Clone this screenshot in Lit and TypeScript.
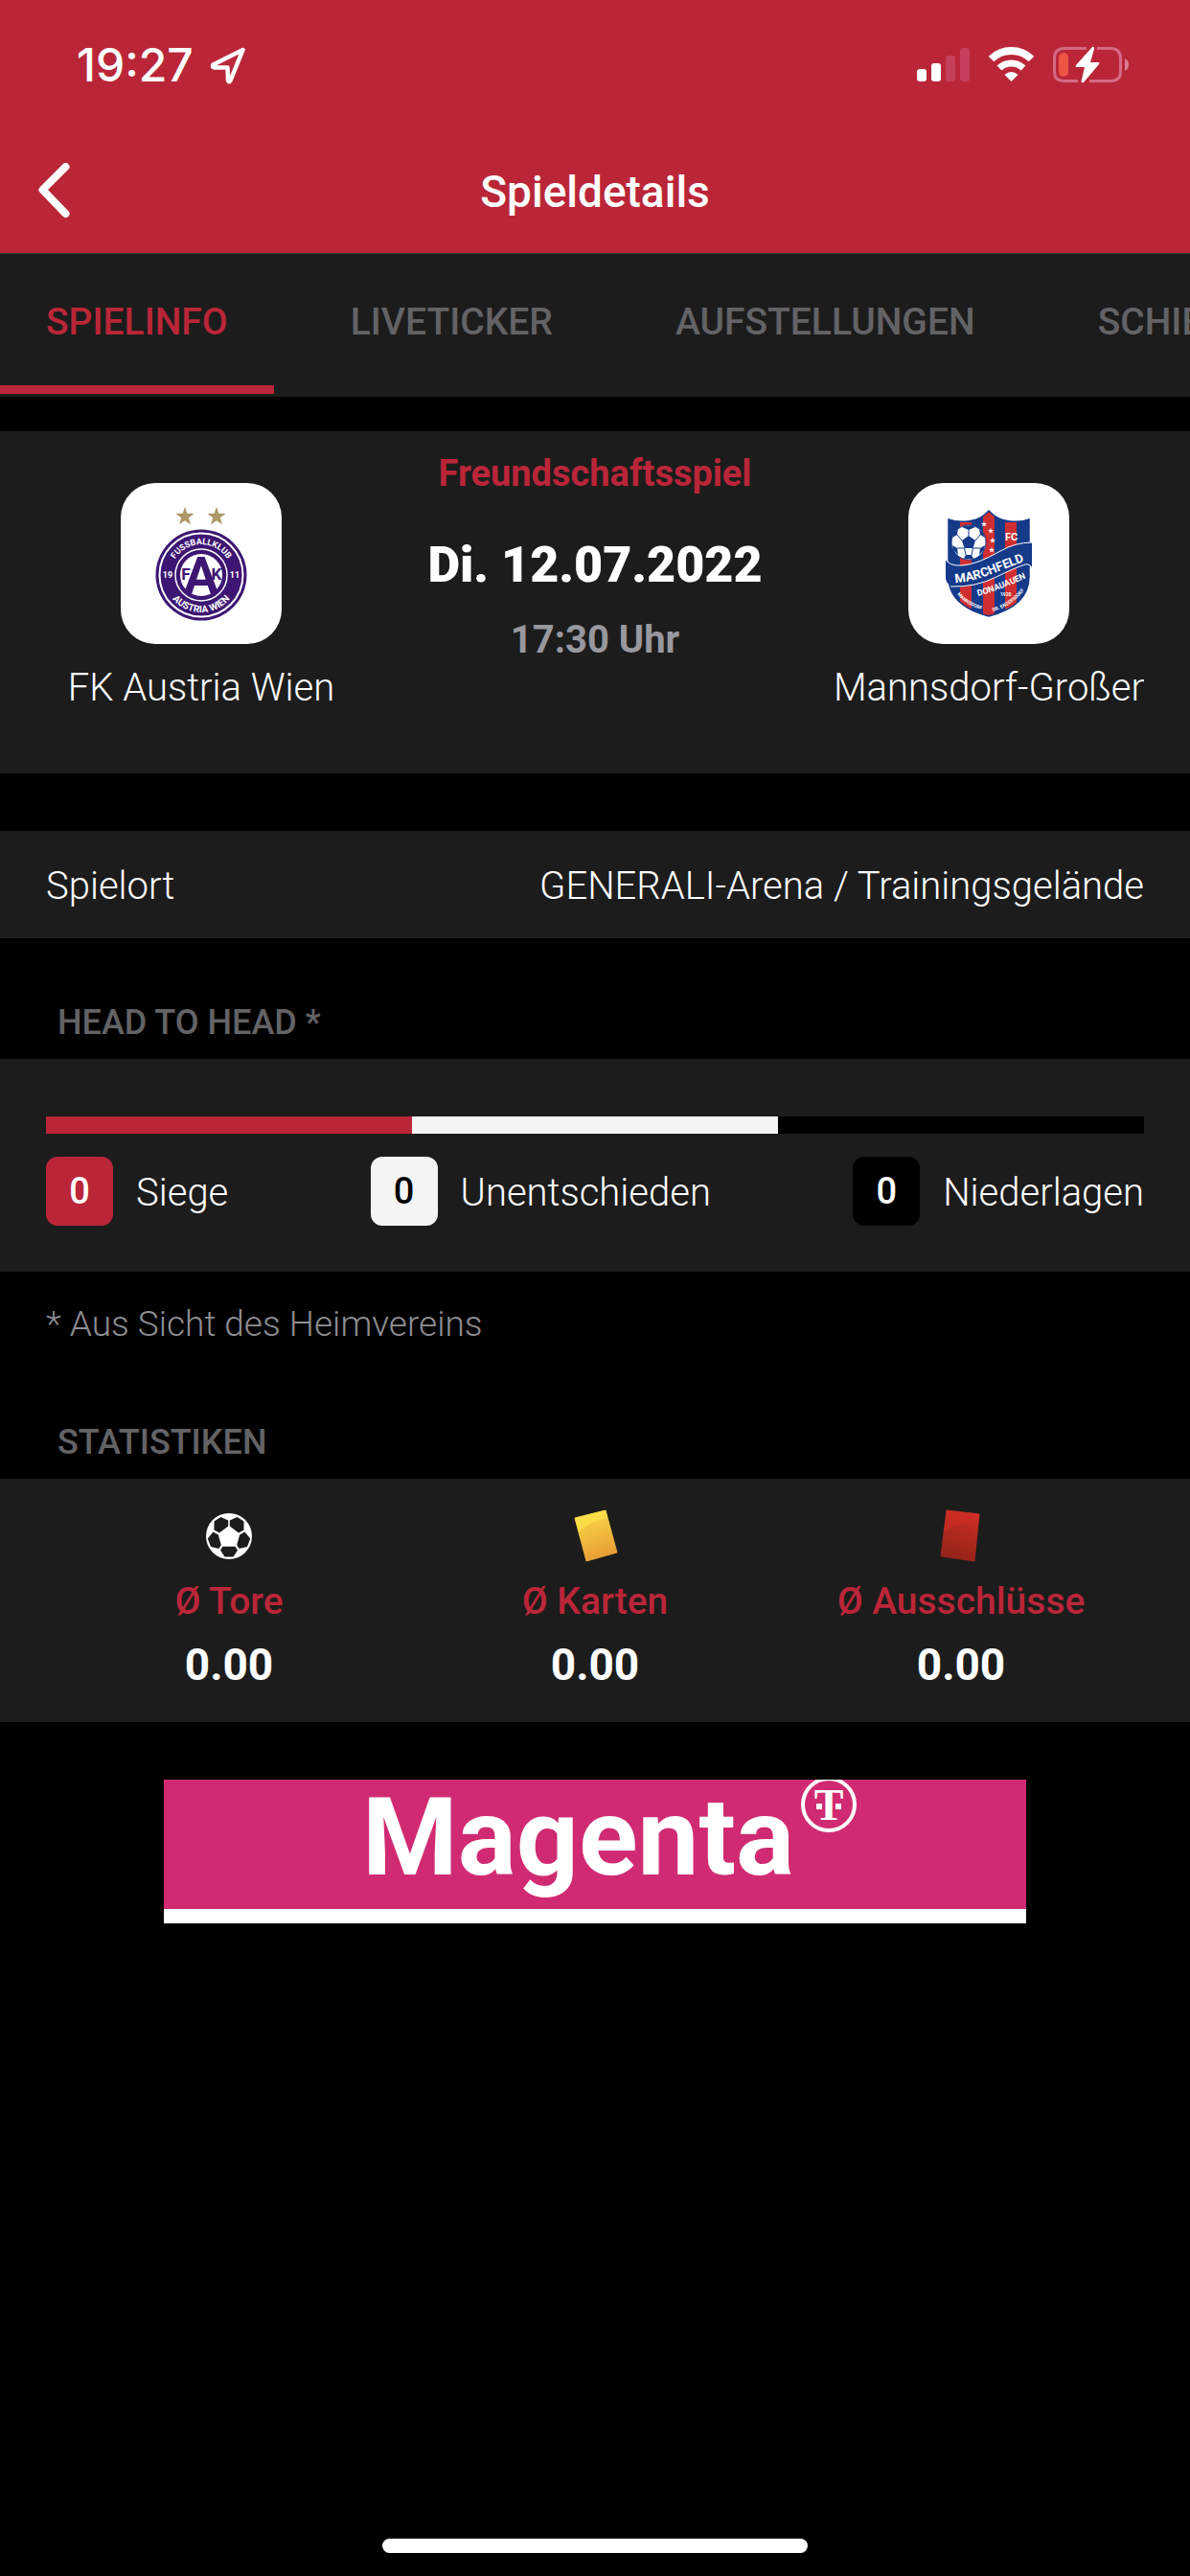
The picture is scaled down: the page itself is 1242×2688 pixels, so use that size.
import { LitElement, html, css, svg } from "lit";
import { customElement, property, state } from "lit/decorators.js";
import { classMap } from "lit/directives/class-map.js";

const STAR = "0,-10 2.4,-3.2 9.6,-3 3.9,1.3 5.9,8.2 0,4.2 -5.9,8.2 -3.9,1.3 -9.6,-3 -2.4,-3.2";

@customElement("status-bar")
class StatusBar extends LitElement {
  static styles = css`
    :host { display: block; }
    .bar {
      display: flex;
      justify-content: space-between;
      align-items: center;
      height: 136px;
      padding: 0 62px 0 80px;
      color: #fff;
    }
    .left { display: flex; align-items: center; gap: 16px; }
    .time { font: 500 48px/56px Inter, "Liberation Sans", sans-serif; }
    svg { display: block; }
  `;

  render() {
    return html`
      <div class="bar">
        <div class="left">
          <span class="time">19:27</span>
          <svg width="40" height="40" viewBox="0 0 40 40" fill="none" stroke="#fff" stroke-width="4.5" stroke-linejoin="round" aria-hidden="true">
            <path d="M35.500 4 L4.500 19.500 Q3 22 6 22.500 L19.500 22.500 L20 36 Q21 38.500 22.500 36 Z"/>
          </svg>
        </div>
        <svg width="223" height="42" viewBox="0 0 223 42" aria-hidden="true">
          <g fill="#fff">
            <rect x="0" y="25" width="10" height="13" rx="3"/>
            <rect x="15" y="19" width="10" height="19" rx="3"/>
            <rect x="30" y="11" width="10" height="27" rx="3" fill="#c5405c"/>
            <rect x="45" y="3" width="10" height="35" rx="3" fill="#c5405c"/>
          </g>
          <g fill="none" stroke="#fff">
            <path d="M77.500 14.500 A30 30 0 0 1 119.500 14.500" stroke-width="8"/>
            <path d="M86 24 A18 18 0 0 1 111 24" stroke-width="7"/>
          </g>
          <path d="M91.500 31 Q98.500 25 105.500 31 L98.500 38 Z" fill="#fff"/>
          <g fill="none" stroke="#d46a84" stroke-width="3">
            <path d="M177 3.500 H154 Q143.500 3.500 143.500 14 V28 Q143.500 37.500 154 37.500 H168"/>
            <path d="M188 3.500 H202 Q212.500 3.500 212.500 14 V28 Q212.500 37.500 202 37.500 H180"/>
          </g>
          <path d="M217 14 Q221 16 221 20.500 T217 27 Z" fill="#d98096"/>
          <rect x="148" y="8" width="10" height="25" rx="5" fill="#ee5545"/>
          <path d="M183 2 L166 21 Q165 23 167 23 H175 L171.500 38 Q172 40 174 39 L190 20 Q191 18 189 18 H181 L185 4 Q185 1 183 2 Z" fill="#fff"/>
        </svg>
      </div>
    `;
  }
}

@customElement("team-crest")
class TeamCrest extends LitElement {
  @property() team = "home";

  static styles = css`
    :host { display: block; }
    .tile {
      width: 168px;
      height: 168px;
      border-radius: 36px;
      background: #fff;
      overflow: hidden;
    }
    svg { display: block; font-family: Roboto, "Liberation Sans", sans-serif; font-weight: 700; }
  `;

  private home() {
    return svg`
      <defs>
        <path id="upper" d="M52 96 A32 32 0 0 1 116 96"/>
        <path id="lower" d="M45 96 A39 39 0 0 0 123 96"/>
      </defs>
      <g fill="#ab9866">
        <polygon points=${STAR} transform="translate(67 35)"/>
        <polygon points=${STAR} transform="translate(100 35)"/>
      </g>
      <circle cx="84" cy="96" r="47.500" fill="#3d1673"/>
      <circle cx="84" cy="96" r="43.500" fill="none" stroke="#fff" stroke-width="2"/>
      <circle cx="84" cy="96" r="27" fill="none" stroke="#fff" stroke-width="1.500"/>
      <circle cx="84" cy="96" r="22" fill="#fff"/>
      <g fill="#fff" text-anchor="middle">
        <text font-size="9"><textPath href="#upper" startOffset="50%">FUSSBALLKLUB</textPath></text>
        <text font-size="10"><textPath href="#lower" startOffset="50%">AUSTRIA WIEN</textPath></text>
        <text x="49" y="99" font-size="9">19</text>
        <text x="119" y="99" font-size="9">11</text>
      </g>
      <g fill="#3d1673" text-anchor="middle">
        <text x="84" y="115" font-size="54">A</text>
        <text x="68" y="101" font-size="17">F</text>
        <text x="100" y="101" font-size="17">K</text>
      </g>`;
  }

  private away() {
    return svg`
      <defs>
        <clipPath id="shield"><path d="M84 29 Q93 39 106 40 Q118 41 126 38 V98 Q126 128 84 139 Q42 128 42 98 V38 Q50 41 62 40 Q75 39 84 29 Z"/></clipPath>
        <path id="name" d="M49 104 Q66 103 84 96 T126 80"/>
        <path id="place" d="M73 118 Q90 114 128 97"/>
        <path id="west" d="M51 116 Q60 128 82 134"/>
        <path id="east" d="M88 134 Q110 128 122 110"/>
      </defs>
      <g clip-path="url(#shield)">
        <rect x="38" y="25" width="92" height="118" fill="#153a8a"/>
        <g fill="#cf2f31">
          <rect x="54" y="41" width="12" height="100"/>
          <rect x="78" y="25" width="12" height="118"/>
          <rect x="101" y="41" width="12" height="100"/>
        </g>
      </g>
      <path d="M84 29 Q93 39 106 40 Q118 41 126 38 V98 Q126 128 84 139 Q42 128 42 98 V38 Q50 41 62 40 Q75 39 84 29 Z" fill="none" stroke="#153a8a" stroke-width="1.500"/>
      <circle cx="63" cy="62" r="18" fill="#fff" stroke="#153a8a" stroke-width="1"/>
      <g fill="#153a8a">
        <polygon points="63,55 70,60 67.500,68 58.500,68 56,60"/>
        <polygon points="56,46 63,49 70,46 67,44.500 59,44.500"/>
        <polygon points="46,57 51,54 52,48 48,52"/>
        <polygon points="80,57 75,54 74,48 78,52"/>
        <polygon points="46,65 51,68 52,75 47,70"/>
        <polygon points="80,65 75,68 74,75 79,70"/>
        <polygon points="58,79 60,75 66,75 68,79"/>
      </g>
      <g stroke="#153a8a" stroke-width="1" fill="none">
        <path d="M63 55V49 M70 60L75 54 M56 60L51 54 M67.500 68L75 68 M58.500 68L51 68 M67.500 68L66 75 M58.500 68L60 75"/>
      </g>
      <g fill="#fff">
        <polygon points=${STAR} transform="translate(79 43) scale(.32)"/>
        <polygon points=${STAR} transform="translate(86 50) scale(.32)"/>
        <polygon points=${STAR} transform="translate(88 60) scale(.32)"/>
        <polygon points=${STAR} transform="translate(87 70) scale(.32)"/>
      </g>
      <path d="M39 80 Q42 87 56 86 Q72 85 96 71 Q112 62 129 62 V89 Q127 84 122 85 Q112 88 92 98 Q70 109 48 109 Q40 106 39 100 Z" fill="#153a8a"/>
      <path d="M39 78 Q41 87 56 86 Q72 85 96 71 Q112 62 129 62 M129 89 Q127 84 122 85 Q112 88 92 98 Q70 109 44 108" fill="none" stroke="#fff" stroke-width="1"/>
      <g fill="#fff">
        <text x="101" y="60" font-size="11">FC</text>
        <text font-size="13"><textPath href="#name">MARCHFELD</textPath></text>
        <text font-size="9"><textPath href="#place">DONAUAUEN</textPath></text>
        <text x="96" y="118" font-size="5">1920</text>
        <text font-size="5"><textPath href="#west">MANNSDORF</textPath></text>
        <text font-size="5"><textPath href="#east">GR. ENZERSDORF</textPath></text>
      </g>`;
  }

  render() {
    return html`
      <div class="tile">
        <svg width="168" height="168" viewBox="0 0 168 168" aria-hidden="true">
          ${this.team === "home" ? this.home() : this.away()}
        </svg>
      </div>
    `;
  }
}

const ballIcon = svg`
  <circle cx="24" cy="28" r="24" fill="#fff"/>
  <g fill="#1c1c1c" transform="translate(0 4)">
    <polygon points="8.500,8.500 15.500,4 23.200,7.500 23.200,13.500 14,20.500 8.500,17.500"/>
    <polygon points="39.500,8.500 32.500,4 24.800,7.500 24.800,13.500 34,20.500 39.500,17.500"/>
    <polygon points="7.500,19.500 12.800,22.500 15.800,33 13.500,37 5,35 1.800,26.500"/>
    <polygon points="40.500,19.500 35.200,22.500 32.200,33 34.500,37 43,35 46.200,26.500"/>
    <polygon points="17.500,34.800 30.500,34.800 33,38.500 28.500,45.500 19.500,45.500 15,38.500"/>
  </g>`;

const yellowIcon = svg`
  <defs><linearGradient id="y" x1=".3" y1="0" x2=".6" y2="1"><stop offset="0" stop-color="#fadb46"/><stop offset="1" stop-color="#e79a35"/></linearGradient></defs>
  <polygon points="3,9 35,1 47,45 15,54" fill="url(#y)" stroke="url(#y)" stroke-linejoin="round"/>
  <path d="M3 9 L35 1 L37 9 Q18 12 7 24 Z" fill="#ffec4e" opacity=".5"/>`;

const redIcon = svg`
  <defs><linearGradient id="r" x1=".6" y1="0" x2=".3" y2="1"><stop offset="0" stop-color="#cb2d24"/><stop offset="1" stop-color="#912318"/></linearGradient></defs>
  <polygon points="9,1 43,5 38,54 3,49" fill="url(#r)" stroke="url(#r)" stroke-linejoin="round"/>
  <path d="M9 1 L43 5 L42 14 Q18 13 6 24 Z" fill="#cf2e25" opacity=".6"/>`;

@customElement("app-root")
class AppRoot extends LitElement {
  @state() private active = 0;

  private tabs = ["SPIELINFO", "LIVETICKER", "AUFSTELLUNGEN", "SCHIEDSRICHTER"];

  private record = [
    { label: "Siege", value: 0, tone: "win", share: 1 },
    { label: "Unentschieden", value: 0, tone: "draw", share: 1 },
    { label: "Niederlagen", value: 0, tone: "loss", share: 1 },
  ];

  private stats = [
    { label: "Ø Tore", value: "0.00", icon: ballIcon },
    { label: "Ø Karten", value: "0.00", icon: yellowIcon },
    { label: "Ø Ausschlüsse", value: "0.00", icon: redIcon },
  ];

  static styles = css`
    :host {
      display: flex;
      flex-direction: column;
      min-height: 100vh;
      background: #000;
      color: #fff;
      font: 300 40px/48px Roboto, "Liberation Sans", sans-serif;
      overflow: hidden;
      --red: #ba2638;
      --panel: #1c1c1c;
      --muted: #636366;
    }
    h1, h2, p, ul { margin: 0; padding: 0; font: inherit; }
    ul { list-style: none; }
    button { border: 0; background: none; padding: 0; font: inherit; color: inherit; }
    svg { display: block; }

    .header { background: var(--red); border-bottom: 1px solid #3a3a3a; }
    .nav {
      display: grid;
      grid-template-columns: 120px 1fr 120px;
      align-items: center;
      height: 128px;
    }
    .back { display: flex; padding: 0 36px; }
    .title { text-align: center; font-weight: 500; font-size: 46px; }

    .tabs { display: flex; gap: 32px; height: 149px; background: var(--panel); overflow: hidden; }
    .tab {
      flex: none;
      height: 146px;
      padding: 4px 48px 0;
      border-bottom: 9px solid transparent;
      box-sizing: border-box;
      color: var(--muted);
      font-weight: 500;
      font-size: 39px;
    }
    .tab.on { color: var(--red); border-color: var(--red); }

    .panel { background: var(--panel); }
    .match {
      display: grid;
      grid-template-columns: 324px 1fr 324px;
      margin-top: 36px;
      padding: 20px 48px 65px;
    }
    .team { display: flex; flex-direction: column; align-items: center; gap: 22px; padding-top: 34px; }
    .team-name { width: 100%; text-align: center; white-space: nowrap; overflow: hidden; }
    .info { display: flex; flex-direction: column; align-items: center; white-space: nowrap; }
    .league { color: var(--red); font-weight: 700; font-size: 38px; }
    .date { margin-top: 42px; font-weight: 900; font-size: 52px; line-height: 60px; }
    .hour { margin-top: 24px; color: #98989f; font-weight: 700; font-size: 40px; }

    .venue {
      display: flex;
      justify-content: space-between;
      margin-top: 60px;
      padding: 34px 48px 30px;
    }
    .heading {
      padding: 0 60px 14px;
      color: var(--muted);
      font-weight: 500;
      font-size: 36px;
    }
    .venue + .heading { padding-top: 64px; }
    .note + .heading { padding-top: 75px; }

    .record { padding: 60px 48px 48px; }
    .meter { display: flex; height: 18px; }
    .meter div { flex-basis: 0; }
    .win { background: var(--red); color: #fff; }
    .draw { background: #f4f4f4; color: #000; }
    .loss { background: #000; color: #fff; }
    .legend { display: flex; justify-content: space-between; margin-top: 24px; }
    .entry { display: flex; align-items: center; gap: 24px; }
    .entry-label { padding-top: 4px; }
    .badge {
      width: 70px;
      border-radius: 12px;
      text-align: center;
      font-weight: 500;
      font-size: 38px;
      line-height: 72px;
    }
    .note { padding: 31px 48px 0; color: #8e8e93; font-size: 37px; }

    .stats { display: grid; grid-template-columns: repeat(3, 1fr); padding: 32px 48px 36px; }
    .stat { display: flex; flex-direction: column; align-items: center; }
    .stat-label { margin-top: 16px; color: var(--red); font-weight: 500; font-size: 39px; }
    .stat-value { margin-top: 18px; font-weight: 700; font-size: 46px; }

    .banner {
      display: block;
      align-self: center;
      width: 900px;
      max-width: 100%;
      margin-top: 60px;
      background: #d02b72;
      border-bottom: 15px solid #fff;
    }
    .banner svg { width: 100%; height: auto; }

    .home {
      align-self: center;
      width: 444px;
      height: 15px;
      margin: auto 0 24px;
      border-radius: 8px;
      background: #fff;
    }
  `;

  render() {
    return html`
      <header class="header">
        <status-bar></status-bar>
        <nav class="nav">
          <button class="back" aria-label="Zurück">
            <svg width="40" height="60" viewBox="0 0 40 60" fill="none" stroke="#fff" stroke-width="8" stroke-linecap="round" stroke-linejoin="round">
              <path d="M32.500 4 L8.500 28 L32.500 53"/>
            </svg>
          </button>
          <h1 class="title">Spieldetails</h1>
        </nav>
      </header>

      <div class="tabs" role="tablist">
        ${this.tabs.map(
          (name, i) => html`<button
            class=${classMap({ tab: true, on: i === this.active })}
            role="tab"
            aria-selected=${i === this.active}
            @click=${() => (this.active = i)}
          >${name}</button>`
        )}
      </div>

      <section class="panel match">
        <div class="team">
          <team-crest team="home"></team-crest>
          <span class="team-name">FK Austria Wien</span>
        </div>
        <div class="info">
          <span class="league">Freundschaftsspiel</span>
          <span class="date">Di. 12.07.2022</span>
          <span class="hour">17:30 Uhr</span>
        </div>
        <div class="team">
          <team-crest team="away"></team-crest>
          <span class="team-name">Mannsdorf-Großenzersdorf</span>
        </div>
      </section>

      <section class="panel venue">
        <span>Spielort</span>
        <span>GENERALI-Arena / Trainingsgelände</span>
      </section>

      <h2 class="heading">HEAD TO HEAD *</h2>
      <section class="panel record">
        <div class="meter">
          ${this.record.map((r) => html`<div class=${r.tone} style="flex-grow:${r.share}"></div>`)}
        </div>
        <ul class="legend">
          ${this.record.map(
            (r) => html`<li class="entry"><span class="badge ${r.tone}">${r.value}</span><span class="entry-label">${r.label}</span></li>`
          )}
        </ul>
      </section>
      <p class="note">* Aus Sicht des Heimvereins</p>

      <h2 class="heading">STATISTIKEN</h2>
      <section class="panel stats">
        ${this.stats.map(
          (s) => html`<div class="stat">
            <svg width="48" height="56" viewBox="0 0 48 56" aria-hidden="true">${s.icon}</svg>
            <span class="stat-label">${s.label}</span>
            <span class="stat-value">${s.value}</span>
          </div>`
        )}
      </section>

      <a class="banner" href="#" aria-label="Magenta">
        <svg viewBox="0 0 900 135">
          <text x="207" y="99" fill="#fff" font-family="Roboto, Liberation Sans, sans-serif" font-weight="700" font-size="114">Magenta</text>
          <circle cx="694" cy="26" r="27" fill="none" stroke="#fff" stroke-width="4"/>
          <text x="694" y="42" text-anchor="middle" fill="#fff" font-family="Liberation Serif, serif" font-weight="700" font-size="46">T</text>
          <rect x="681" y="25" width="6" height="6" fill="#fff"/>
          <rect x="701" y="25" width="6" height="6" fill="#fff"/>
        </svg>
      </a>

      <div class="home"></div>
    `;
  }
}
